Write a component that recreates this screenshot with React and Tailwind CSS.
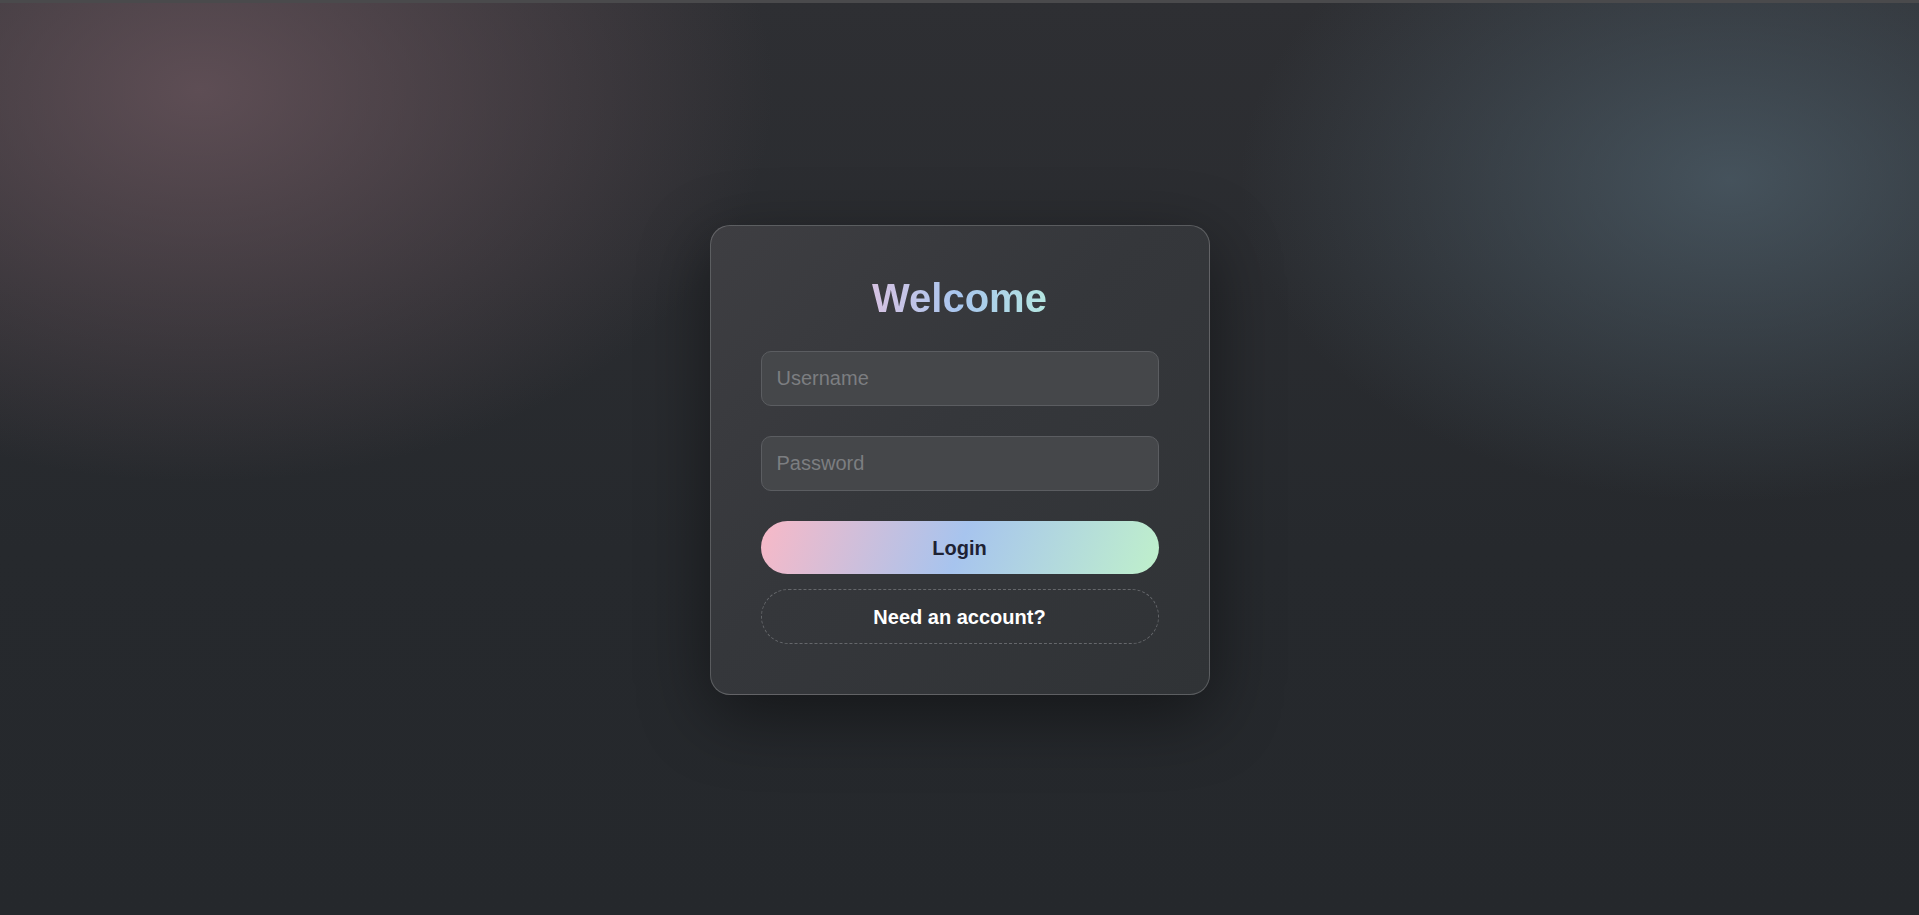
export default function App() {
  return (
    <div
      className="relative flex min-h-[915px] w-full flex-col bg-[#25282c] font-['Liberation_Sans',Arial,sans-serif]"
    >
      {/* background glows */}
      <div className="pointer-events-none absolute inset-0 bg-[radial-gradient(ellipse_820px_560px_at_200px_90px,rgba(110,88,96,0.75),transparent_70%),radial-gradient(ellipse_700px_460px_at_1730px_180px,rgba(80,98,110,0.7),transparent_70%),linear-gradient(180deg,#2e2f33_0%,#26292d_60%,#25282c_100%)]" />
      <div className="relative h-[3px] w-full bg-[#4a4a4c]" />

      <div className="relative flex flex-1 items-start justify-center pt-[222px]">
        <div className="flex w-[500px] flex-col rounded-[20px] border border-white/20 bg-[linear-gradient(135deg,#3e3e42_0%,#35373b_45%,#303336_100%)] px-[50px] pt-[50px] pb-[50px] shadow-[0_20px_70px_rgba(0,0,0,0.45)]">
          <h1 className="mb-[30px] self-center bg-[linear-gradient(90deg,#d6c2e2_0%,#a8c6ee_50%,#b4e6e0_100%)] bg-clip-text text-center text-[40px] font-bold leading-[45px] text-transparent">
            Welcome
          </h1>

          <input
            type="text"
            placeholder="Username"
            className="h-[55px] w-full rounded-[10px] border border-[#5b5d61] bg-[#45474a] px-[15px] text-[20px] text-white outline-none placeholder:text-[#7c7e81]"
          />
          <input
            type="password"
            placeholder="Password"
            className="mt-[30px] h-[55px] w-full rounded-[10px] border border-[#5b5d61] bg-[#45474a] px-[15px] text-[20px] text-white outline-none placeholder:text-[#7c7e81]"
          />

          <button className="mt-[30px] h-[53px] w-full rounded-full bg-[linear-gradient(110deg,#f8b9c7_0%,#a7c4ee_50%,#bff0cb_100%)] text-[20px] font-bold text-[#1e2234]">
            Login
          </button>
          <button className="mt-[15px] h-[55px] w-full rounded-full border border-dashed border-[#65676b] bg-transparent text-[20px] font-bold text-white">
            Need an account?
          </button>
        </div>
      </div>
    </div>
  );
}
